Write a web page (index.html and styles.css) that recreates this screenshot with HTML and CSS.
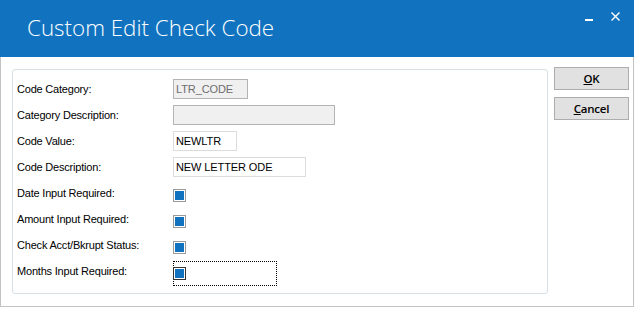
FILE: index.html
```html
<!DOCTYPE html>
<html>
<head>
    <meta charset="utf-8" />
    <title>Custom Edit Check Code</title>
    <link rel="stylesheet" href="styles.css">
</head>
<body>
    <div class="window">
        <div class="titlebar">
            <span class="title">Custom Edit Check Code</span>
            <svg class="btn-min" width="8" height="8" viewBox="0 0 8 8"><rect x="0" y="6" width="8" height="2" fill="#fff" /></svg>
            <svg class="btn-close" width="9" height="9" viewBox="0 0 9 9"><path d="M0.5 0.5 L8.5 8.5 M8.5 0.5 L0.5 8.5" stroke="#fff" stroke-width="1.4" /></svg>
        </div>
        <div class="content">
            <div class="group">
                <div class="row">
                    <span class="label">Code Category:</span>
                    <span class="textbox disabled w-cat">LTR_CODE</span>
                </div>
                <div class="row">
                    <span class="label">Category Description:</span>
                    <span class="textbox disabled w-catdesc"></span>
                </div>
                <div class="row">
                    <span class="label">Code Value:</span>
                    <span class="textbox w-value">NEWLTR</span>
                </div>
                <div class="row">
                    <span class="label">Code Description:</span>
                    <span class="textbox w-desc">NEW LETTER ODE</span>
                </div>
                <div class="row">
                    <span class="label">Date Input Required:</span>
                    <span class="check"></span>
                </div>
                <div class="row">
                    <span class="label">Amount Input Required:</span>
                    <span class="check"></span>
                </div>
                <div class="row">
                    <span class="label">Check Acct/Bkrupt Status:</span>
                    <span class="check"></span>
                </div>
                <div class="row">
                    <span class="label">Months Input Required:</span>
                    <span class="focus"><span class="check focused"></span></span>
                </div>
            </div>
            <div class="buttons">
                <button class="btn"><u>O</u>K</button>
                <button class="btn"><u>C</u>ancel</button>
            </div>
        </div>
    </div>
</body>
</html>
```

FILE: styles.css
```css
body {
    margin: 0;
    background: #fff;
    font-family: "Liberation Sans", Arial, sans-serif;
}

.window {
    width: 634px;
    box-sizing: border-box;
}

.titlebar {
    height: 57px;
    background: #1173bf;
    display: flex;
    align-items: center;
    padding-left: 27px;
    color: #fff;
}

.title {
    font-family: "Open Sans", sans-serif;
    font-weight: 300;
    font-size: 22.4px;
    flex: 1;
    padding-bottom: 2px
}

.btn-min {
    margin-top: -24px;
    margin-right: 18px
}

.btn-close {
    margin-top: -24px;
    margin-right: 14px
}

.content {
    display: flex;
    align-items: flex-start;
    border: 1px solid #c3c3c3;
    border-top: 0;
    width: 634px;
    box-sizing: border-box;
    padding: 10px 4px 12px 11px;
}

.group {
    width: 536px;
    height: 225px;
    box-sizing: border-box;
    margin-top: 2px;
    border: 1px solid #d5dfe5;
    border-radius: 3px;
    padding: 6px 0 0 4px;
}

.row {
    display: flex;
    align-items: center;
    height: 26px;
}

.label {
    width: 156px;
    font-size: 11px;
    letter-spacing: -0.2px;
    color: #000;
}

.textbox {
    height: 20px;
    box-sizing: border-box;
    border: 1px solid #dcdcdc;
    background: #fff;
    font-size: 11px;
    letter-spacing: -0.1px;
    line-height: 18px;
    padding-left: 2px;
    color: #000;
}

    .textbox.disabled {
        background: #f0f0f0;
        border-color: #b4b4b4;
        color: #6d6d6d;
    }

.w-cat {
    width: 75px
}

.w-catdesc {
    width: 162px
}

.w-value {
    width: 64px
}

.w-desc {
    width: 133px
}

.check {
    width: 13px;
    height: 13px;
    box-sizing: border-box;
    border: 1px solid #999;
    padding: 1px;
    background: #1173bf content-box;
    margin-top: 5px;
}

    .check.focused {
        border-color: #333;
        margin: 5px 0 0 -1px
    }

.focus {
    width: 104px;
    height: 25px;
    box-sizing: border-box;
    border: 1px dotted #000;
    display: flex;
    align-items: flex-start;
    margin-top: 4px
}

.buttons {
    display: flex;
    flex-direction: column;
    gap: 7px;
    margin-left: 6px;
}

.btn {
    width: 75px;
    height: 23px;
    background: #e1e1e1;
    border: 1px solid #adadad;
    font-family: "Open Sans", sans-serif;
    font-weight: 600;
    font-size: 11.5px;
    letter-spacing: -0.2px;
    color: #000;
    padding: 0;
}
```
